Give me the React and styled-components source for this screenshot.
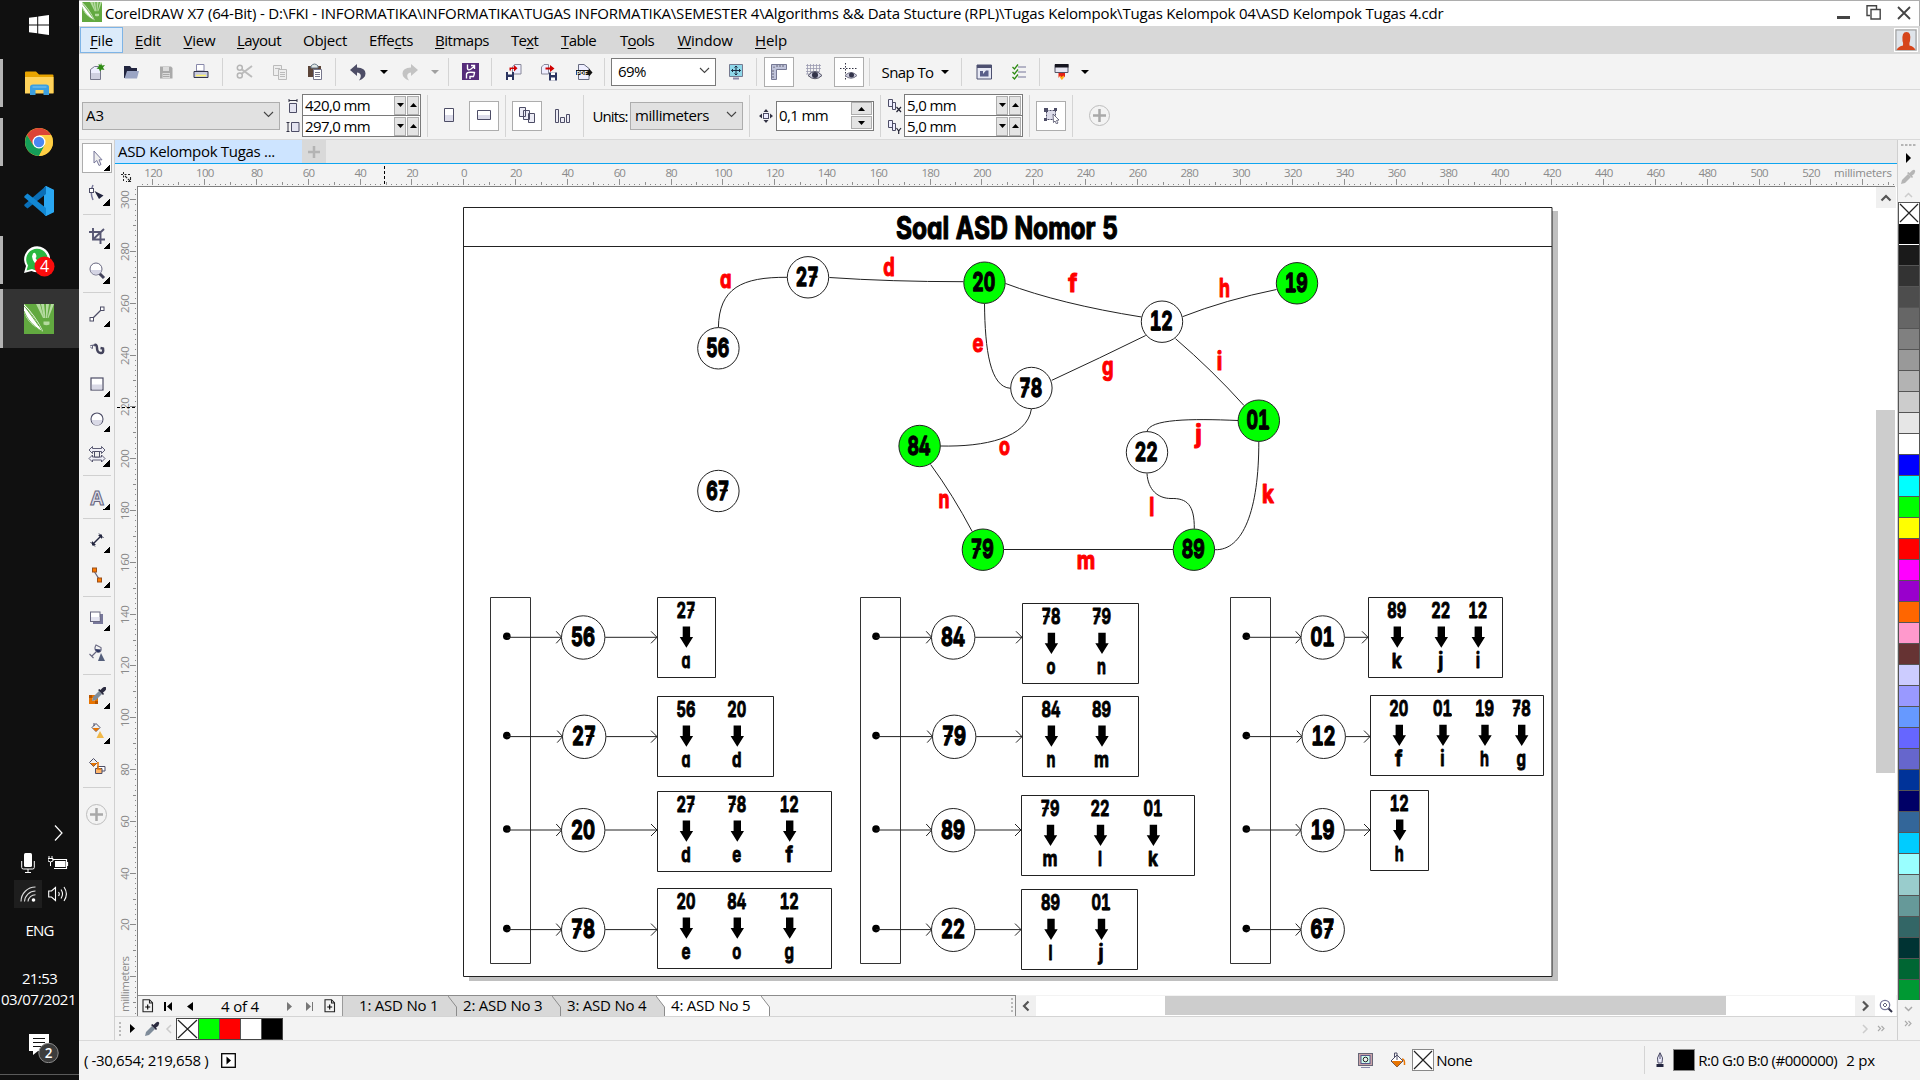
import React from 'react';
import styled, { createGlobalStyle, css } from 'styled-components';

const Global = createGlobalStyle`
  html, body { margin: 0; padding: 0; }
  body { width: 1920px; height: 1080px; overflow: hidden; background: #f3f3f3; }
  * { box-sizing: border-box; }
  svg { display: block; flex: none; }
`;

const Screen = styled.div`
  display: grid;
  grid-template-columns: 79px 1fr;
  width: 1920px;
  height: 1080px;
  font-family: 'Open Sans', 'Noto Sans', sans-serif;
  font-size: 15px;
  line-height: 20px;
  color: #000;
  white-space: pre;
`;

const Label = styled.span`
  letter-spacing: ${(p) => p.$ls || 0}px;
  font-size: ${(p) => p.$size || 15}px;
  color: ${(p) => p.$color || '#000'};
  flex: none;
`;

const Icon = ({ w = 20, h = w, children }) => (
  <svg width={w} height={h} viewBox={`0 0 ${w} ${h}`} fill="none">{children}</svg>
);

/* ---------- Windows taskbar ---------- */

const Taskbar = styled.aside`
  display: flex;
  flex-direction: column;
  height: 1080px;
  background: linear-gradient(#5a5a5a, #5a5a5a) 0 1074px / 100% 1px no-repeat #101010;
  color: #fff;
`;
const StartButton = styled.div`
  height: 53px;
  display: flex;
  align-items: center;
  justify-content: center;
  padding: 0 2px 4px 0;
`;
const TaskButton = styled.div`
  height: 59px;
  display: flex;
  padding-right: 1px;
  align-items: center;
  justify-content: center;
  background: ${(p) => (p.$active ? '#333' : 'transparent')};
  background-image: ${(p) => (p.$open ? 'linear-gradient(#b4b4b4,#b4b4b4)' : 'none')};
  background-repeat: no-repeat;
  background-position: 0 center;
  background-size: 3px ${(p) => (p.$active ? 59 : 48)}px;
`;
const Tray = styled.div`
  margin: auto 0 5px;
  display: flex;
  flex-direction: column;
  height: 258px;
  flex: none;
`;
const TrayRow = styled.div`
  height: ${(p) => p.$h}px;
  flex: none;
  display: flex;
  align-items: center;
  justify-content: ${(p) => (p.$end ? 'flex-end' : 'center')};
  padding: ${(p) => p.$pt || 0}px ${(p) => p.$pr || 0}px 0 ${(p) => p.$pl || 0}px;
`;
const TrayCell = styled.div`
  width: 28px;
  height: 28px;
  margin-right: ${(p) => p.$mr || 0}px;
  display: flex;
  align-items: center;
  justify-content: center;
  background: ${(p) => (p.$hot ? '#1e1e1e' : 'transparent')};
`;

const CorelLogo = ({ size }) => (
  <svg width={size} height={size} viewBox="0 0 30 30">
    <rect width="30" height="30" fill="#62a940" />
    <path d="M12 0h4l4 14h-1zM17 0h3l1.500 14h-1.500zM22 0h3l-2 14h-1zM27 0h3l-5.500 14h-1z" fill="#b5dba0" />
    <path d="M19.500 17.500h6v3q-3 1.500-6 0z" fill="#b5dba0" />
    <path d="M0 0V8C2 15 8 22 18 27.500C19 27 19 27 18 25C14 17 8 8 0 0Z" fill="#fff" />
    <path d="M0 7C3 15 9 22 18 27.500M0 2C8 10 13 17 18 27" stroke="#62a940" strokeWidth=".9" fill="none" />
    <path d="M2 4L15 22" stroke="#62a940" strokeWidth="1" />
  </svg>
);

const WindowsIcon = () => (
  <svg width="20" height="20" viewBox="0 0 20 20" fill="#fff">
    <path d="M0 2.800L8.200 1.700V9.500H0zM9.200 1.500L20 0V9.500H9.200zM0 10.500H8.200V18.300L0 17.200zM9.200 10.500H20V20L9.200 18.500z" />
  </svg>
);
const FolderIcon = () => (
  <svg width="29" height="24" viewBox="0 0 29 24">
    <path d="M0 1.500Q0 .5 1 .5H11L14 3.500H27.500Q28.500 3.500 28.500 4.500V22H0z" fill="#e8a400" />
    <path d="M0 6H28.500V22.500H0z" fill="#ffd35c" />
    <path d="M5 24V16Q5 13.500 8 13.500H21Q24 13.500 24 16V24H18.500V19H10.500V24z" fill="#3c9fe0" />
    <path d="M7.500 16H21.500" stroke="#69bbee" strokeWidth="1.500" />
  </svg>
);
const ChromeIcon = () => (
  <svg width="28" height="28" viewBox="-14 -14 28 28">
    <circle r="14" fill="#fbc92f" />
    <path d="M-12.100 -7A14 14 0 0 1 12.100 -7L0 -6.600L-5.700 3.300Z" fill="#dc4437" />
    <path d="M-12.100 -7A14 14 0 0 0 0 14L5.700 3.300L-5.700 3.300Z" fill="#149e58" />
    <path d="M12.100 -7H0L5.700 3.300L0 14A14 14 0 0 0 12.100 -7Z" fill="#ffce44" />
    <circle r="6.500" fill="#fff" />
    <circle r="5.200" fill="#4a87f0" />
  </svg>
);
const CodeIcon = () => (
  <svg width="30" height="30" viewBox="0 0 30 30">
    <path d="M21.500 0L30 4V26L21.500 30L20 28V2Z" fill="#2aa7f2" />
    <path d="M22 0V8L3.500 22.500L0.500 20Q0 19 .5 18.500Z" fill="#0a6fb8" />
    <path d="M22 30V22L3.500 7.500L0.500 10Q0 11 .5 11.500Z" fill="#1288d4" />
    <path d="M22 0L30 4V26L22 30Z" fill="#2aa7f2" />
  </svg>
);
const WhatsAppIcon = () => (
  <svg width="32" height="34" viewBox="0 -1.500 32 34">
    <path d="M1 28.500L3 21.500A13 13 0 1 1 8.500 26.500Z" fill="#fff" />
    <path d="M3.500 26L5 21A10.800 10.800 0 1 1 9 24.600Z" fill="#2bb741" />
    <path d="M10 9Q12 7 13 10T12.500 13.500Q15 18 19 19.500L18 21.500Q10 20 9 12Z" fill="#fff" />
    <circle cx="21.500" cy="22" r="10" fill="#fb0d0d" />
    <text x="21.500" y="27.500" textAnchor="middle" fontSize="16" fill="#fff" fontFamily="Open Sans, sans-serif">4</text>
  </svg>
);

function WindowsTaskbar() {
  return (
    <Taskbar>
      <StartButton><WindowsIcon /></StartButton>
      <TaskButton $open><FolderIcon /></TaskButton>
      <TaskButton $open><ChromeIcon /></TaskButton>
      <TaskButton><CodeIcon /></TaskButton>
      <TaskButton $open><WhatsAppIcon /></TaskButton>
      <TaskButton $open $active><CorelLogo size={30} /></TaskButton>
      <Tray>
        <TrayRow $h={32} $end $pr={16}>
          <Icon w={9} h={16}><path d="M1 .5L8 8L1 15.500" stroke="#fff" strokeWidth="1.200" /></Icon>
        </TrayRow>
        <TrayRow $h={28} $pl={7}>
          <TrayCell $mr={3}>
            <Icon w={14} h={20}>
              <rect x="3" y="0" width="8" height="14" rx="1.500" fill="#fff" />
              <path d="M.7 8V14.500Q.7 16 2.500 16H11.500Q13.300 16 13.300 14.500V8M7 16V19.500M4 19.500H10" stroke="#fff" />
            </Icon>
          </TrayCell>
          <TrayCell>
            <Icon w={21} h={14}>
              <path d="M4.500 3.500H18.500V12.500H6M19.500 6V10" stroke="#fff" strokeWidth="1.200" />
              <rect x="7" y="5" width="10.500" height="6" fill="#fff" />
              <path d="M1 0V2M4 0V2M0 2.500H5V5Q2.500 7 0 5ZM2.500 6V10" stroke="#fff" />
            </Icon>
          </TrayCell>
        </TrayRow>
        <TrayRow $h={33} $pl={7}>
          <TrayCell $hot $mr={3}>
            <Icon w={16} h={16}>
              <path d="M1 15.500A14.500 14.500 0 0 1 15.500 1M4.500 15.500A11 11 0 0 1 15.500 5M8 15.500A7.500 7.500 0 0 1 15.500 8.700" stroke="#ddd" strokeWidth="1.100" />
              <circle cx="13.500" cy="14" r="1.800" fill="#fff" />
            </Icon>
          </TrayCell>
          <TrayCell>
            <Icon w={21} h={18}>
              <path d="M.7 6H3.500L7.500 2.500V15.500L3.500 12H.7ZM10.500 7Q12 9 10.500 11M13 4.500Q16 9 13 13.500M16 2Q20.800 9 16 16" stroke="#fff" strokeWidth="1.100" />
            </Icon>
          </TrayCell>
        </TrayRow>
        <TrayRow $h={39}><Label $color="#fff" $ls={-0.8}>ENG</Label></TrayRow>
        <TrayRow $h={19} />
        <TrayRow $h={19}><Label $color="#fff" $ls={-0.6}>21:53</Label></TrayRow>
        <TrayRow $h={24} $pr={2}><Label $color="#fff" $ls={-0.46}>03/07/2021</Label></TrayRow>
        <TrayRow $h={64} $pl={9} $pt={7}>
          <svg width="32" height="32" viewBox="0 0 32 32">
            <path d="M1 3H21V20H10L5 24V20H1Z" fill="#fff" />
            <path d="M5 7.500H17M5 11.500H17M5 15.500H17" stroke="#101010" />
            <circle cx="20.500" cy="22" r="9.700" fill="#3c3c3c" stroke="#8a8a8a" />
            <text x="20.500" y="27" textAnchor="middle" fontSize="13.500" fontWeight="600" fill="#fff" fontFamily="Open Sans, sans-serif">2</text>
          </svg>
        </TrayRow>
      </Tray>
    </Taskbar>
  );
}

/* ---------- Window chrome ---------- */

const AppWindow = styled.main`
  display: grid;
  grid-template-rows: 26px 28px 36px 50px 901px 39px;
  min-width: 0;
`;
const TitleBar = styled.header`
  display: flex;
  align-items: center;
  border-top: 1px solid #adadad;
  border-right: 1px solid #adadad;
  background: #fff;
  padding: 0 8px 3px 3px;
  gap: 3px;
`;
const TitleText = styled(Label)`
  flex: 1;
  padding-top: 1px;
`;
const WindowButtons = styled.div`
  display: flex;
  align-items: center;
  gap: 16px;
  padding-top: 1px;
`;
const MenuBar = styled.nav`
  display: flex;
  align-items: center;
  background: #d8d8d8;
  padding: 0 2px 0 1px;
`;
const MenuItem = styled.div`
  width: ${(p) => p.$w}px;
  height: 26px;
  display: flex;
  align-items: center;
  justify-content: center;
  letter-spacing: ${(p) => p.$ls}px;
  border: 1px solid ${(p) => (p.$hot ? '#7eb4e6' : 'transparent')};
  background: ${(p) => (p.$hot ? '#dcebfa' : 'transparent')};
`;
const Underlined = styled.span`
  text-decoration: underline;
  text-underline-offset: 2px;
  text-decoration-thickness: 1px;
`;
const Account = styled.div`
  margin-left: auto;
  display: flex;
`;
const Toolbar = styled.div`
  display: flex;
  align-items: center;
  background: #f3f3f3;
  border-bottom: 1px solid #d9d9d9;
`;
const Slot = styled.div`
  width: ${(p) => p.$w || 35}px;
  flex: none;
  display: flex;
  align-items: center;
  justify-content: center;
`;
const Divider = styled.div`
  width: 1px;
  height: ${(p) => p.$h || 28}px;
  margin: 0 ${(p) => p.$mr ?? 4}px 0 ${(p) => p.$ml ?? 3}px;
  flex: none;
  background: #d4d4d4;
`;
const Toggle = styled.div`
  width: 30px;
  height: 30px;
  margin: 0 ${(p) => p.$mr ?? 3}px 0 ${(p) => p.$ml ?? 3}px;
  flex: none;
  display: flex;
  align-items: center;
  justify-content: center;
  background: #fff;
  border: 1px solid #adadad;
`;
const Combo = styled.div`
  width: ${(p) => p.$w}px;
  height: 28px;
  margin: 0 ${(p) => p.$mr || 0}px 0 ${(p) => p.$ml || 0}px;
  padding: 0 5px 2px ${(p) => p.$pl || 3}px;
  flex: none;
  display: flex;
  align-items: center;
  justify-content: space-between;
  border: 1px solid ${(p) => (p.$light ? '#7a7a7a' : '#adadad')};
  background: ${(p) => (p.$light ? '#fff' : '#e1e1e1')};
`;
const Chevron = () => <Icon w={11} h={7}><path d="M1 1L5.500 5.500L10 1" stroke="#444" strokeWidth="1.100" /></Icon>;
const Caret = ({ color = '#000' }) => <Icon w={8} h={4}><path d="M0 0H8L4 4Z" fill={color} /></Icon>;

const DARK = '#4d4d66';
const Drop = ({ x = 0, y = 0, body = '#7f8c9a' }) => (
  <g transform={`translate(${x} ${y})`}>
    <path d="M1 15L2 11L8 5L11 8L5 14Z" fill={body} />
    <path d="M7 4L12 9L13 8L12 6.500Q16 4 15 1.500T9.500 4L8.500 3Z" fill={body === '#7f8c9a' ? '#2b2b3f' : body} />
  </g>
);

function Menus() {
  const items = [
    [0, 'File', 43, -0.18, true], [0, 'Edit', 50, -0.16], [0, 'View', 53, -0.19], [0, 'Layout', 66, -0.54],
    [2, 'Object', 66, -0.26], [4, 'Effects', 66, -0.36], [0, 'Bitmaps', 76, -0.48], [2, 'Text', 49, -0.72],
    [0, 'Table', 59, -0.6], [1, 'Tools', 58, -0.65], [0, 'Window', 78, -0.28], [0, 'Help', 54, -0.11],
  ];
  return (
    <MenuBar>
      {items.map(([u, t, w, ls, hot]) => (
        <MenuItem key={t} $w={w} $ls={ls} $hot={hot}>
          <span>{t.slice(0, u)}<Underlined>{t[u]}</Underlined>{t.slice(u + 1)}</span>
        </MenuItem>
      ))}
      <Account>
        <svg width="24" height="24" viewBox="0 0 24 24">
          <rect x=".5" y=".5" width="23" height="23" fill="#ddd" stroke="#fff" />
          <rect x="2" y="2" width="20" height="20" fill="#dfe4ea" stroke="#999" />
          <path d="M3 22Q3 19 9 17.500Q9.500 15 8.500 13Q7.500 4 12.500 4T16 13Q15 15 15.500 17.500Q21 19 21 22Z" fill="#d6451b" />
        </svg>
      </Account>
    </MenuBar>
  );
}

function StandardToolbar() {
  return (
    <Toolbar>
      <Slot $w={34}><Icon w={18} h={18}>
        <path d="M3.500 16.500V6.500L7.500 3.500H13.500V16.500Z" fill="#eef" stroke="#77778c" /><path d="M4 10H13V16H4Z" fill="#cfcfe0" />
        <path d="M14 0L15 2.500L18 2L16 4.500L17.500 7L14.500 6.500L13 8.500L12 6L9.500 5.500L12 3.500L11.500 1L13.500 2Z" fill="#2e8b13" /></Icon></Slot>
      <Slot><Icon w={18} h={18}>
        <path d="M2 3H8L9.500 5H15V15H2Z" fill="#22253f" /><path d="M5 8H17L15 15.500H2.500Z" fill="#9ba5c4" /></Icon></Slot>
      <Slot><Icon w={16} h={16}>
        <path d="M2 2.500H13L14.500 4V14.500H2Z" fill="#aaa" /><path d="M5 3H11V7H5ZM4.500 9H12V14H4.500Z" fill="#dcdcdc" /><path d="M5 10.500H11.500M5 12.500H11.500" stroke="#aaa" /></Icon></Slot>
      <Slot><Icon w={18} h={18}>
        <path d="M4.500 1.500H12V8H4.500Z" fill="#fff" stroke="#88a" /><path d="M2 8.500H16V14.500H2Z" fill="#c9cbe0" stroke="#33344a" /><path d="M4 12.500H14" stroke="#fff36a" strokeWidth="1.500" /></Icon></Slot>
      <Divider $ml={4} $mr={4} />
      <Slot><Icon w={18} h={18}>
        <path d="M16 3L6 10.500M16 14L6 6.500" stroke="#bcbcbc" strokeWidth="2" /><circle cx="3.800" cy="4.800" r="2.500" stroke="#b5b5b5" strokeWidth="1.500" /><circle cx="3.800" cy="12.500" r="2.500" stroke="#b5b5b5" strokeWidth="1.500" /></Icon></Slot>
      <Slot><Icon w={18} h={18}>
        <path d="M2.500 2.500H10.500V12.500H2.500Z" fill="#eee" stroke="#bbb" /><path d="M7.500 6.500H15.500V16.500H7.500Z" fill="#eee" stroke="#bbb" /><path d="M4 5.500H9M9 9.500H14M9 11.500H14M9 13.500H14" stroke="#bbb" /></Icon></Slot>
      <Slot><Icon w={18} h={18}>
        <path d="M2 3H15V14H2Z" fill="#5b4438" /><path d="M5 3Q8.500 -1 12 3V5H5Z" fill="#dfe6e4" stroke="#678" /><path d="M7.500 6.500H15.500V16.500H7.500Z" fill="#fff" stroke="#77778c" /><path d="M9 9.500H14M9 11.500H14M9 13.500H14" stroke="#77778c" /></Icon></Slot>
      <Divider />
      <Slot $w={36}><Icon w={18} h={18}>
        <path d="M1 7L8 1V4.500Q16.500 5 16.500 10.500Q16.500 15 10 17.500Q12.500 14 11.500 11.500Q10.500 9.500 8 9.500V13Z" fill={DARK} /></Icon></Slot>
      <Slot $w={16}><Caret /></Slot>
      <Slot $w={36}><Icon w={18} h={18}>
        <path d="M17 7L10 1V4.500Q1.500 5 1.500 10.500Q1.500 15 8 17.500Q5.500 14 6.500 11.500Q7.500 9.500 10 9.500V13Z" fill="#c3c3c3" /></Icon></Slot>
      <Slot $w={14}><Caret color="#a0a0a0" /></Slot>
      <Divider $ml={6} />
      <Slot><Icon w={17} h={17}>
        <rect width="17" height="17" fill="#552c7a" /><path d="M5.500 1.500V5.500Q6 8 9 6L12 3.500M9 2.500H12.500V6M4.500 15.500V11Q5 8.500 12.500 9.500Q12 13 11.500 13.500H8V16" stroke="#fff" strokeWidth="1.400" /></Icon></Slot>
      <Divider />
      <Slot><Icon w={18} h={18}>
        <path d="M9.500 1.500H16V11H7.500V4Z" fill="#eef" stroke="#889" /><path d="M1 9H9V17H1Z" fill="#2c3560" /><path d="M3 9H7V11.500H3ZM3 14H7V17H3Z" fill="#fff" /><path d="M4.500 7.500V4.500H9V2L12.500 5.200L9 8.500V6H6V7.500Z" fill="#d00000" /></Icon></Slot>
      <Slot><Icon w={18} h={18}>
        <path d="M1.500 11V4L4 1.500H8.500V11Z" fill="#eef" stroke="#889" /><path d="M9 9.500H17V17.500H9Z" fill="#2c3560" /><path d="M11 9.500H15V12H11ZM11 14.500H15V17.500H11Z" fill="#fff" /><path d="M5.500 6.500V4.500H10V2L14.500 5.500L10 9V6.500Z" fill="#d00000" /></Icon></Slot>
      <Slot><Icon w={18} h={18}>
        <path d="M3.500 1.500H9L14 5.500V16.500H3.500Z" fill="#eef" stroke="#666a80" /><path d="M1 7H14V5.500L17.500 9.500L14 13.500V12H1Z" fill="#111" />
        <text x="1.500" y="11.700" fontSize="6" fontWeight="700" fill="#fff" fontFamily="Roboto, sans-serif">PDF</text></Icon></Slot>
      <Divider $mr={6} />
      <Combo $w={105} $pl={6} $light $mr={2}><Label $ls={-0.52}>69%</Label><Chevron /></Combo>
      <Slot><Icon w={16} h={17}>
        <path d="M1.500 1.500H14.500V13.500H1.500Z" fill="#8fd8ea" stroke="#777a90" /><path d="M5 15.500H11" stroke="#88a" strokeWidth="2" />
        <path d="M8 3V12M3.500 7.500H12.500M6.500 4.500L8 3L9.500 4.500M6.500 10.500L8 12L9.500 10.500M5 6L3.500 7.500L5 9M11 6L12.500 7.500L11 9" stroke="#1a2a40" /></Icon></Slot>
      <Divider />
      <Toggle><Icon w={18} h={18}><path d="M1.500 1.500H16.500V6.500H6.500V16.500H1.500Z" fill="#bfc3da" stroke="#777a95" /><path d="M4 3.500V5M7 2V4M10 2V4M13 2V4M2 8H4M2 11H4M2 14H4" stroke="#667" /></Icon></Toggle>
      <Slot $w={34}><Icon w={18} h={18}>
        <path d="M2.500 1V11M5.500 1V11M8.500 1V9M11.500 1V8M14.500 1V9M1 2.500H16M1 5.500H16M1 8.500H14M1 11H6" stroke="#9a9ab0" strokeWidth=".8" />
        <path d="M3 12.500Q10 4.500 17 12.500Q10 19 3 12.500Z" fill="#ccd" stroke="#556" /><circle cx="10" cy="12" r="3" fill="#33344a" /></Icon></Slot>
      <Toggle $mr={2} $ml={3}><Icon w={18} h={18}>
        <path d="M5.500 0V18M0 5.500H18" stroke="#334" strokeDasharray="1.500 1.500" /><path d="M5 12.500Q11 6.500 17 12.500Q11 18 5 12.500Z" fill="#ccd" stroke="#778" /><circle cx="11.500" cy="12" r="2.500" fill="#33344a" /></Icon></Toggle>
      <Divider $mr={9} />
      <Slot $w={57}><Label $ls={-0.59}>Snap To</Label></Slot>
      <Slot $w={18}><Caret /></Slot>
      <Divider $ml={7} />
      <Slot><Icon w={16} h={16}>
        <path d="M1 1H15.500V15H1Z" fill="#e7e9f5" stroke="#4d5070" /><path d="M1 1H15.500V4H1Z" fill="#4d5070" /><path d="M4 7H7V10L10 6.500H12.500V12.500H4Z" fill="#5a5f8a" /></Icon></Slot>
      <Slot><Icon w={16} h={18}>
        <path d="M7 4H15M7 9H15M7 14H15" stroke="#77779a" strokeWidth="1.200" /><path d="M1.500 4L3.500 6L7 1.500M1.500 9L3.500 11L7 6.500M1.500 14L3.500 16L7 11.500" stroke="#2e8b13" strokeWidth="1.300" /></Icon></Slot>
      <Divider />
      <Slot><Icon w={16} h={17}>
        <path d="M1 1.500H14V9.500H1Z" fill="#e6e6f2" stroke="#556" /><path d="M1 1H14.500V4.500H1Z" fill="#15151f" /><path d="M5 11H10.500Q10.500 15 7.700 17Q5 14.500 5 11Z" fill="#ffb01a" /><path d="M4.500 10H11V14.500L9.500 12.500L7.500 14L6 12.500L4.500 15Z" fill="#e32214" /></Icon></Slot>
      <Slot $w={12}><Caret /></Slot>
    </Toolbar>
  );
}

const SpinPair = styled.div`
  width: ${(p) => p.$w}px;
  margin-left: 1px;
  flex: none;
  border: 1px solid #7a7a7a;
  background: #fff;
  display: flex;
  flex-direction: column;
`;
const SpinLine = styled.div`
  height: 20px;
  display: flex;
  align-items: center;
  padding: 0 1px 0 2px;
  & + & { border-top: 1px solid #7a7a7a; height: 21px; }
`;
const SpinButton = styled.div`
  width: ${(p) => p.$w || 12}px;
  height: ${(p) => p.$h || 19}px;
  margin-left: ${(p) => (p.$push ? 'auto' : '1px')};
  display: flex;
  align-items: center;
  justify-content: center;
  background: #e4e4e4;
  border: 1px solid #adadad;
`;
const IconStack = styled.div`
  width: ${(p) => p.$w || 17}px;
  display: flex;
  flex-direction: column;
  align-items: center;
  gap: ${(p) => p.$gap || 5}px;
  flex: none;
`;
const Nudge = styled.div`
  width: 98px;
  height: 30px;
  display: flex;
  align-items: center;
  border: 1px solid #7a7a7a;
  background: #fff;
  padding: 0 1px 0 2px;
`;
const NudgeText = styled(Label)`
  padding-bottom: 2px;
`;
const NudgeButtons = styled.div`
  margin-left: auto;
  display: flex;
  flex-direction: column;
  gap: 1px;
`;
const Tri = ({ up }) => <Icon w={7} h={4}><path d={up ? 'M0 4L3.500 0L7 4Z' : 'M0 0L3.500 4L7 0Z'} fill="#000" /></Icon>;

function Pair({ w, values, ls }) {
  return (
    <SpinPair $w={w}>
      {values.map((v, i) => (
        <SpinLine key={i}>
          <Label $ls={ls}>{v}</Label>
          <SpinButton $push><Tri /></SpinButton>
          <SpinButton><Tri up /></SpinButton>
        </SpinLine>
      ))}
    </SpinPair>
  );
}

const DupIcon = ({ s }) => (
  <Icon w={15} h={15}>
    <path d="M1.500 1.500H5.500V8.500H1.500ZM5.500 4.500H8.500V11.500H5.500Z" fill="#eef" stroke={DARK} />
    {s === 'x' ? <path d="M9.500 9L14 14M14 9L9.500 14" stroke="#223" strokeWidth="1.200" /> : <path d="M9.500 9L11.700 12L14 9M11.700 11.500V15" stroke="#223" strokeWidth="1.200" />}
  </Icon>
);

const PropertyToolbar = styled(Toolbar)`
  padding: 2px 0 0 3px;
`;
const PlusCircle = () => (
  <Icon w={23}><circle cx="11.500" cy="11.500" r="10" stroke="#bdbdbd" /><path d="M11.500 5V18M5 11.500H18" stroke="#a9a9a9" strokeWidth="2.500" /></Icon>
);

function PropertyBar() {
  return (
    <PropertyToolbar>
      <Combo $w={198} $mr={4}><Label>A3</Label><Chevron /></Combo>
      <IconStack $gap={8}>
        <Icon w={12} h={14}><path d="M2 1.500H10M2 0V3M10 0V3" stroke="#334" /><path d="M2.500 4.500H9.500V13.500H2.500Z" fill="#e4e4f0" stroke={DARK} /></Icon>
        <Icon w={14} h={12}><path d="M2 1V11M.5 1.500H3.500M.5 10.500H3.500" stroke="#334" /><path d="M5.500 1.500H13V10.500H5.500Z" fill="#e4e4f0" stroke={DARK} /></Icon>
      </IconStack>
      <Pair w={119} values={['420,0 mm', '297,0 mm']} ls={-0.61} />
      <Divider $h={42} $ml={6} />
      <Slot $w={34}><Icon w={11} h={15}><path d="M.5.5H9.500V13.500H.5Z" fill="#fff" stroke={DARK} /><path d="M1 7H9V13H1Z" fill="#dcdcea" /></Icon></Slot>
      <Toggle><Icon w={15} h={11}><path d="M.5.5H13.500V9.500H.5Z" fill="#fff" stroke={DARK} /><path d="M1 5H13V9H1Z" fill="#dcdcea" /></Icon></Toggle>
      <Divider $h={42} $mr={3} />
      <Toggle><Icon w={17} h={17}><path d="M.5.5H6.500V9.500H.5ZM4.500 3.500H10.500V12.500H4.500ZM9.500 6.500H15.500V15.500H9.500Z" fill="#ececf5" stroke={DARK} /></Icon></Toggle>
      <Slot $w={35}><Icon w={17} h={15}><path d="M1.500 1.500H4.500V14.500H1.500ZM6.500 9.500H10.500V14.500H6.500ZM12.500 6.500H15.500V14.500H12.500Z" fill="#ececf5" stroke={DARK} /></Icon></Slot>
      <Divider $h={42} $mr={8} />
      <Slot $w={36}><Label $ls={-0.89}>Units:</Label></Slot>
      <Combo $w={113} $ml={2} $pl={4}><Label $ls={-0.4}>millimeters</Label><Chevron /></Combo>
      <Divider $h={42} $ml={6} $mr={5} />
      <Slot $w={21}><Icon w={14} h={14}><rect x="4.500" y="4.500" width="5" height="5" fill="#eef" stroke={DARK} /><path d="M7 0L9.500 3H4.500ZM7 14L9.500 11H4.500ZM0 7L3 4.500V9.500ZM14 7L11 4.500V9.500Z" fill="#334" /></Icon></Slot>
      <Nudge>
        <NudgeText $ls={-0.62}>0,1 mm</NudgeText>
        <NudgeButtons>
          <SpinButton $w={21} $h={13}><Tri up /></SpinButton>
          <SpinButton $w={21} $h={13}><Tri /></SpinButton>
        </NudgeButtons>
      </Nudge>
      <Divider $h={42} $ml={6} $mr={5} />
      <IconStack $w={17} $gap={6}><DupIcon s="x" /><DupIcon s="y" /></IconStack>
      <Pair w={119} values={['5,0 mm', '5,0 mm']} ls={-0.62} />
      <Divider $h={42} $ml={6} $mr={3} />
      <Toggle><Icon w={17} h={17}><path d="M3.500 3.500H12.500V12.500H3.500Z" fill="#dcdcea" stroke={DARK} strokeDasharray="2 1" /><path d="M1 1H5V5H1ZM11 1H14V4H11ZM1 11H4V14H1Z" fill={DARK} /><path d="M10 7L16 13L13.500 13.500L15 16L13.500 17L12 14L10.500 15.500Z" fill="#fff" stroke={DARK} strokeWidth=".8" /></Icon></Toggle>
      <Divider $h={42} $ml={3} $mr={15} />
      <PlusCircle />
    </PropertyToolbar>
  );
}

/* ---------- Toolbox ---------- */

const Workspace = styled.div`
  display: grid;
  grid-template-columns: 36px 1fr 23px;
  border-bottom: 1px solid #d9d9d9;
  min-height: 0;
`;
const Toolbox = styled.div`
  background: #f3f3f3;
  border-right: 1px solid #d0d0d0;
  display: flex;
  flex-direction: column;
  align-items: center;
`;
const Tool = styled.div`
  width: 30px;
  height: 30px;
  margin: 3px 0 2px;
  flex: none;
  display: flex;
  align-items: center;
  justify-content: center;
  border: 1px solid transparent;
  ${(p) => p.$active && css`background: #fff; border-color: #adadad;`}
  ${(p) => p.$fly && css`
    background-image: linear-gradient(135deg, transparent 50%, #000 50%);
    background-size: 7px 7px;
    background-repeat: no-repeat;
    background-position: right 1px bottom 1px;
  `}
`;
const ToolRule = styled.div`
  width: 28px;
  height: 1px;
  margin: 4px 0 3px;
  flex: none;
  background: #d0d0d0;
`;
const ToolSpace = styled.div`
  margin-top: 12px;
`;

const tools = [
  { a: true, f: true, d: <><path d="M6 2V14L8.800 11.500L11 16.500L13 15.500L11 10.800H14Z" fill="#eee" stroke="#77779a" strokeWidth="1" /></> },
  { f: true, d: <><path d="M5 1Q1.500 8 5 16" stroke="#77779a" strokeWidth="1.500" /><rect x="1.500" y="4.500" width="4" height="4" fill="#fff" stroke={DARK} /><path d="M6.500 7L15.500 11.500L11 15Z" fill="#22253f" /></> },
  0,
  { f: true, d: <path d="M5 1V12.500H17M1 5H12.500V17M6 11.500L16 2" stroke="#565672" strokeWidth="1.900" /> },
  { f: true, d: <><path d="M11 11L16 16" stroke="#44445c" strokeWidth="3" /><circle cx="8" cy="7" r="6" fill="#fff" stroke="#66667f" /><path d="M2.600 8H13.400A5.500 5.500 0 0 1 2.600 8Z" fill="#d4d4e4" /></> },
  0,
  { f: true, d: <><path d="M4.500 13.500L13.500 4.500" stroke={DARK} strokeWidth="1.200" /><rect x="2" y="12.500" width="3.500" height="3.500" fill="#fff" stroke={DARK} /><rect x="12.500" y="2" width="3.500" height="3.500" fill="#fff" stroke={DARK} /></> },
  { d: <><path d="M6 5.500Q9 3.500 9 8T12.500 13T15 8.500L12.500 8" stroke="#44445c" strokeWidth="2.500" /><path d="M2 6L4.500 5V8.500L2.500 7.500M4.500 6L7 4.500" stroke="#66667f" /></> },
  { f: true, d: <><rect x="3" y="3" width="12" height="12" fill="#fff" stroke={DARK} strokeWidth="1.200" /><path d="M4 9.500H14V14.500H4Z" fill="#d9d9e6" /></> },
  { f: true, d: <><circle cx="9" cy="9" r="6" fill="#fff" stroke={DARK} strokeWidth="1.100" /><path d="M3.700 10H14.300A5.300 5.300 0 0 1 3.700 10Z" fill="#d9d9e6" /></> },
  { f: true, d: <><path d="M1 5L4.500 1.500V3.500H13.500V1.500L17 5L13.500 8.500V6.500H4.500V8.500ZM1 13.500L4.500 10V12H13.500V10L17 13.500L13.500 17V15H4.500V17Z" fill="#f0f0f8" stroke={DARK} strokeWidth=".9" /><path d="M6.500 6.500H11.500V12H6.500Z" fill="#eee" stroke={DARK} /></> },
  0,
  { f: true, d: <text x="9" y="16.500" textAnchor="middle" fontSize="19" fontWeight="700" fontFamily="Open Sans, sans-serif" fill="#dcdce8" stroke="#66667f" strokeWidth="1">A</text> },
  0,
  { f: true, d: <><path d="M5 13L13 5" stroke="#22253f" strokeWidth="1.500" /><path d="M4 14.500V10L8 14ZM14 3.500V8L10 4Z" fill="#22253f" /><path d="M2.500 11L7 15.500M11 2.500L15.500 7" stroke="#22253f" /></> },
  { f: true, d: <><path d="M6 5L11 13" stroke="#66667f" strokeWidth="1.200" /><rect x="4.500" y="2" width="4" height="4" fill="#ff7a00" stroke="#99501a" /><rect x="9.500" y="12" width="4" height="4" fill="#ff7a00" stroke="#99501a" /></> },
  0,
  { f: true, d: <><path d="M5 5H15V15H5Z" fill="#77779a" /><rect x="2.500" y="3" width="9.500" height="9.500" fill="#fff" stroke="#66667f" /><path d="M3 8H11.500V12H3Z" fill="#e4e4f0" /></> },
  { d: <><path d="M8 1L13 3.500Q14 9 9 8Q5.500 5 8 1ZM8 8L4 12M1.500 10L5.500 14" stroke="#66667f" strokeWidth="1.100" /><path d="M7 5L13 5.500Q12 9 9 8Z" fill="#2c3560" /><path d="M13 9L17 17H10Z" fill="#55607c" /></> },
  0,
  { f: true, d: <><rect x="1" y="8" width="9" height="9" fill="#e87400" /><path d="M1 8H4V11H1ZM7 14H10V17H7Z" fill="#b55500" /><path d="M4 11H7V14H4Z" fill="#ffb25a" /><Drop x={3} y={-1} body="#7f8c9a" /></> },
  { f: true, d: <><path d="M4 5.500L8 1.500L12 5.500L8 9.500Z" fill="#eee" stroke={DARK} /><path d="M4.500 6H11.500L8 9.500Z" fill="#e87400" /><path d="M6 1V4" stroke={DARK} /><path d="M12 9L16 16H8.500Z" fill="#f1b94a" /></> },
  { d: <><path d="M1.500 5.500L5.500 1.500L9.500 5.500L5.500 9.500Z" fill="#eee" stroke={DARK} /><path d="M2.500 6H9L5.500 9.500Z" fill="#e87400" /><path d="M9.500 9.500H17V14H9.500Z" fill="#fff" stroke={DARK} /><path d="M7.500 11.500H14V16.500H7.500Z" fill="#ffb66b" stroke={DARK} /><path d="M10 5V12H13" stroke="#e87400" strokeWidth="1.500" /></> },
  0,
];

/* ---------- Rulers ---------- */

const PX = 2.5905;
const HRuler = () => {
  const ticks = [];
  for (let mm = -124; mm <= 552; mm += 2) {
    const x = Math.floor(463.8 + mm * PX) - 137;
    const y = mm % 20 === 0 ? 15 : mm % 10 === 0 ? 18 : 20;
    ticks.push(<rect key={mm} x={x} y={y} width="1" height={mm % 10 === 0 ? 21 - y : 1} fill={mm % 10 === 0 ? '#909090' : '#888'} />);
  }
  const labels = [];
  for (let mm = -120; mm <= 520; mm += 20) {
    labels.push(<text key={mm} x={463.8 + mm * PX - 137 + 0.5} y="13" textAnchor="middle" textLength={String(Math.abs(mm)).length * 6.1}>{Math.abs(mm)}</text>);
  }
  return (
    <svg width="1760" height="23" viewBox="0 0 1760 23" fontSize="11.500" fill="#8a8a8a" fontFamily="Open Sans, sans-serif">
      {ticks}{labels}
      <text x="1697" y="13" textLength="58">millimeters</text>
      <path d="M247.500 2V22" stroke="#000" strokeDasharray="3 2" />
      <path d="M0 22.500H1758" stroke="#7f7f7f" />
    </svg>
  );
};
const VRuler = () => {
  const ticks = [];
  const labels = [];
  for (let mm = 304; mm >= -14; mm -= 2) {
    const y = Math.floor(976.8 - mm * PX) - 187;
    if (y < 0) continue;
    const x = mm % 20 === 0 ? 15 : mm % 10 === 0 ? 18 : 20;
    ticks.push(<rect key={mm} x={x} y={y} width={mm % 10 === 0 ? 21 - x : 1} height="1" fill="#8a8a8a" />);
    if (mm % 20 === 0 && mm > 0) {
      labels.push(<text key={'t' + mm} transform={`translate(14 ${y + 0.5}) rotate(-90)`} textAnchor="middle" textLength={String(mm).length * 6.3}>{mm}</text>);
    }
  }
  return (
    <svg width="23" height="829" viewBox="0 0 23 829" fontSize="11.500" fill="#8a8a8a" fontFamily="Open Sans, sans-serif">
      {ticks}{labels}
      <text transform="translate(14 825) rotate(-90)" textLength="56">millimeters</text>
      <path d="M2 220.500H22" stroke="#000" strokeDasharray="3 2" />
      <path d="M22.500 0V829" stroke="#7f7f7f" />
    </svg>
  );
};

/* ---------- Drawing ---------- */

const GREEN = '#00ff00';
const DrawingSvg = styled.svg`
  font-family: Inter, Roboto, sans-serif;
  font-weight: 700;
  font-feature-settings: 'cv11', 'cv02', 'tnum', 'kern' 0;
  text { stroke-linejoin: round; }
`;

function Digits({ x, y, value, size, w }) {
  const half = w / 2;
  return (
    <g fill="#000" stroke="#000" strokeWidth={size > 23 ? 1.3 : 0.9}>
      <text x={x - half} y={y} fontSize={size} textLength={w} lengthAdjust="spacingAndGlyphs">{value}</text>
      {[...value].map((c, i) => {
        const cx = x - half + half * i + half / 2;
        if (c === '7') return <path key={i} d={`M${cx - half * 0.25} ${y - size * 0.36}h${half * 0.56}`} strokeWidth={size * 0.08} strokeLinecap="round" />;
        if (c === '1') return <path key={i} d={`M${cx - half * 0.28} ${y - size * 0.05}h${half * 0.64}`} strokeWidth={size * 0.12} strokeLinecap="round" />;
        return null;
      })}
    </g>
  );
}

const nodes = [
  ['27', 808, 277.3], ['20', 984.5, 282.7, 1], ['12', 1162, 321.7], ['19', 1297, 283.3, 1], ['56', 718.4, 348.3],
  ['78', 1031.4, 388], ['84', 919.6, 446, 1], ['01', 1258.8, 420.7, 1], ['22', 1147, 452.3], ['67', 718.4, 491],
  ['79', 982.9, 549.7, 1], ['89', 1193.9, 549.7, 1],
];
const edges = [
  'M718.400 327.500C719 288 742 277 787 277.300', 'M829.400 277.500Q890 281.700 963.500 281.700', 'M1005.500 283.500Q1060 304 1141.600 317',
  'M1182.500 316.700Q1225 300 1276.500 289.500', 'M984.500 303.500C985 350 990 387 1010.500 388.300', 'M1145.700 335.500Q1100 358 1051.800 380.300',
  'M1175.500 338.700Q1212 370 1244 405.500', 'M1238 420.500C1190 418.500 1150 419 1147 431.500', 'M1031.400 409C1027 438 985 447 940.500 446',
  'M930.600 464.500Q953 495 972.200 531.500', 'M1003.700 549.500H1173', 'M1147 473.500C1148 490 1158 498.500 1171 498.500C1187 498 1194.500 505 1194.300 528.700',
  'M1258.800 441.500C1259 510 1243 551 1214.700 549.700',
];
const edgeLabels = [
  ['a', 725.7, 288, 11.5], ['d', 889, 276, 11.5], ['e', 978, 351.7, 11], ['f', 1072.7, 292, 9], ['h', 1224.5, 297, 11],
  ['g', 1107.8, 375, 11.5], ['i', 1219.6, 370, 5.5], ['j', 1198.5, 443, 6.5], ['k', 1268, 503, 12], ['l', 1151.8, 516, 5],
  ['m', 1086, 568.5, 18.5], ['n', 944, 508, 11], ['o', 1004.5, 455.3, 11],
];
const lists = [
  { x: 490, dot: 506.8, c: 583.2, rows: [
    ['56', 657, 715.7, 597, [['27', 'a', 686.4]]],
    ['27', 657, 773.6, 696, [['56', 'a', 686.4], ['20', 'd', 737.3]]],
    ['20', 657, 831.5, 791, [['27', 'd', 686.4], ['78', 'e', 737.3], ['12', 'f', 789.7]]],
    ['78', 657, 831.5, 888, [['20', 'e', 686.4], ['84', 'o', 737.3], ['12', 'g', 789.7]]]] },
  { x: 860, dot: 876, c: 953.2, rows: [
    ['84', 1022, 1138.6, 603.3, [['78', 'o', 1051.4], ['79', 'n', 1102]]],
    ['79', 1022, 1138.6, 696, [['84', 'n', 1051.4], ['89', 'm', 1102]]],
    ['89', 1021, 1194.7, 795.3, [['79', 'm', 1050.5], ['22', 'l', 1100.5], ['01', 'k', 1153.4]]],
    ['22', 1021, 1137.7, 889.3, [['89', 'l', 1051], ['01', 'j', 1101.5]]]] },
  { x: 1230, dot: 1246.3, c: 1322.7, rows: [
    ['01', 1368, 1502.7, 597, [['89', 'k', 1397.3], ['22', 'j', 1441.3], ['12', 'i', 1478.3]]],
    ['12', 1370, 1543.7, 695.3, [['20', 'f', 1399.3], ['01', 'i', 1443], ['19', 'h', 1485], ['78', 'g', 1521.7]]],
    ['19', 1370, 1428.7, 790, [['12', 'h', 1399.7]]],
    ['67']] },
];
const rowY = [637, 736.3, 829.7, 929.3];
const letterW = { a: 9, d: 9.5, e: 9, f: 7.5, g: 9.5, h: 9, i: 4.3, j: 5, k: 10, l: 4, m: 15, n: 9, o: 9 };

const Drawing = () => (
  <DrawingSvg width="1738" height="808" viewBox="138 187 1738 808">
    <path d="M469 211H1558V981H469Z" fill="#c0c0c0" />
    <path d="M463.500 207.500H1552V976.500H463.500Z" fill="#fff" stroke="#222" />
    <path d="M464 246.500H1552" stroke="#222" />
    <text x="896" y="238.500" fontSize="31" textLength="222" lengthAdjust="spacingAndGlyphs" stroke="#000" strokeWidth="1.200">Soal ASD Nomor 5</text>
    <g fill="none" stroke="#222" strokeWidth="1">{edges.map((d) => <path key={d} d={d} />)}</g>
    {nodes.map(([t, x, y, g]) => (
      <g key={t}>
        <circle cx={x} cy={y} r="20.700" fill={g ? GREEN : '#fff'} stroke="#222" />
        <Digits x={x - 0.7} y={y + 8.7} value={t} size={26} w={23} />
      </g>
    ))}
    <g fill="#f00" stroke="#f00" strokeWidth="1.100" fontSize="25">
      {edgeLabels.map(([t, x, y, w]) => <text key={t} x={x - w / 2} y={y} textLength={w} lengthAdjust="spacingAndGlyphs">{t}</text>)}
    </g>
    {lists.map((l) => (
      <g key={l.x}>
        <path d={`M${l.x + 0.5} 597.500h${l.x === 490 ? 40 : 40}v366h-40Z`} fill="none" stroke="#333" />
        {l.rows.map(([t, x1, x2, top, items], i) => {
          const y = rowY[i] + 0.3;
          const cx = l.c + (i === 1 ? 1 : 0);
          return (
            <g key={t}>
              <circle cx={l.dot} cy={y - 1} r="3.800" />
              <path d={`M${l.dot} ${y}H${cx - 22}m-5 -6l5.500 6l-5.500 6`} fill="none" stroke="#222" />
              <circle cx={cx} cy={y + 0.2} r="21.700" fill="#fff" stroke="#222" />
              <Digits x={cx - 0.3} y={y + 8.7} value={t} size={26} w={24} />
              {items && (
                <>
                  <path d={`M${cx + 22} ${y}H${x1}m-6 -6l6 6l-6 6`} fill="none" stroke="#222" />
                  <path d={`M${x1 + 0.5} ${Math.floor(top)}.500H${Math.floor(x2)}.500v80H${x1 + 0.5}Z`} fill="none" stroke="#222" />
                  {items.map(([n, c, x]) => (
                    <g key={n}>
                      <Digits x={x - 0.5} y={top + 20.7} value={n} size={21} w={19} />
                      <path d={`M${x - 3.7} ${top + 29.5}h7.400v10.500h3l-6.700 10.700l-6.700 -10.700h3Z`} />
                      <text x={x - 0.5 - letterW[c] / 2} y={top + 71} fontSize="20.500" textLength={letterW[c]} lengthAdjust="spacingAndGlyphs" stroke="#000" strokeWidth=".8">{c}</text>
                    </g>
                  ))}
                </>
              )}
            </g>
          );
        })}
      </g>
    ))}
  </DrawingSvg>
);

/* ---------- Document area ---------- */

const DocumentArea = styled.section`
  display: grid;
  grid-template-rows: 24px 23px 808px 22px 23px;
  min-width: 0;
`;
const DocTabs = styled.div`
  display: flex;
  background: #e9e9e9;
  border-bottom: 1px solid #0ea5f0;
`;
const DocTab = styled.div`
  width: 187px;
  padding: 1px 0 0 3px;
  background: #cde4ff;
`;
const NewTab = styled.div`
  width: 24px;
  display: flex;
  align-items: center;
  justify-content: center;
  background: #d9d9d9;
`;
const RulerRow = styled.div`
  display: grid;
  grid-template-columns: 22px 1fr;
  background: #f3f3f3;
`;
const Corner = styled.div`
  display: flex;
  align-items: center;
  justify-content: center;
  padding-top: 3px;
`;
const CanvasRow = styled.div`
  display: grid;
  grid-template-columns: 23px 1738px 21px;
  background: #fff;
`;
const VRulerBox = styled.div`
  height: 829px;
  background: #f3f3f3;
`;
const VScroll = styled.div`
  display: flex;
  flex-direction: column;
  justify-content: space-between;
  width: 20px;
  background: linear-gradient(#cdcdcd, #cdcdcd) 0 223px / 19px 363px no-repeat #fff;
`;
const ScrollButton = styled.div`
  width: 20px;
  height: ${(p) => p.$h || 21}px;
  flex: none;
  display: flex;
  align-items: center;
  justify-content: center;
  background: #f0f0f0;
`;
const NavRow = styled.div`
  display: grid;
  grid-template-columns: 878px 859px 22px;
  margin-left: 23px;
  height: 22px;
  background: #f3f3f3;
`;
const PageNav = styled.div`
  display: flex;
  align-items: flex-start;
  height: 21px;
  border-top: 1px solid #8c8c8c;
  border-right: 1px solid #8c8c8c;
`;
const NavSlot = styled.div`
  width: ${(p) => p.$w}px;
  height: 20px;
  padding-right: ${(p) => p.$pr || 0}px;
  flex: none;
  display: flex;
  align-items: center;
  justify-content: center;
`;
const PageTab = styled.div`
  width: ${(p) => p.$w}px;
  height: 20px;
  line-height: 18px;
  flex: none;
  display: flex;
  justify-content: space-between;
  background: ${(p) => (p.$active ? '#fff' : '#d8d8d8')};
  padding-left: ${(p) => p.$pl || 6}px;
  border-left: ${(p) => (p.$first ? '1px solid #9a9a9a' : 'none')};
`;
const PageCount = styled(Label)`
  line-height: 18px;
  padding-bottom: 1px;
`;
const Grip = styled.div`
  width: 2px;
  height: 16px;
  margin: 2px 2px 0 auto;
  background: repeating-linear-gradient(#b9b9b9 0 2px, transparent 2px 4px);
`;
const HScroll = styled.div`
  display: flex;
  justify-content: space-between;
  margin-top: 1px;
  height: 20px;
  background: linear-gradient(#cdcdcd, #cdcdcd) 149px 0 / 561px 19px no-repeat #fff;
`;
const Navigator = styled.div`
  display: flex;
  align-items: center;
  justify-content: center;
  background: #fff;
  margin: 0 1px 1px 0;
`;
const DocPalette = styled.div`
  display: flex;
  align-items: center;
  background: #f3f3f3;
  padding-left: 4px;
  border-top: 1px solid #d4d4d4;
  margin-top: -1px;
`;
const Swatches = styled.div`
  display: flex;
  height: 22px;
  border: 1px solid #444;
  margin-left: 2px;
`;
const MiniSwatch = styled.div`
  width: 21px;
  background: ${(p) => p.$c};
  border-right: 1px solid #555;
  &:first-child { width: 22px; }
  &:last-child { border-right: 0; width: 20px; }
`;

const Cross = ({ w, h }) => (
  <svg width={w} height={h} viewBox={`0 0 ${w} ${h}`}>
    <rect width={w} height={h} fill="#fff" />
    <path d={`M1 1L${w - 1} ${h - 1}M${w - 1} 1L1 ${h - 1}`} stroke="#222" strokeWidth="1.200" />
  </svg>
);
const PageAdd = () => <Icon w={12} h={14}><path d="M1 .7H7.500L10.500 3.700V12.800H1ZM7.500 .7V4H10.500" stroke="#222" strokeWidth="1.100" /><path d="M5.700 5.500V10.500M3.200 8H8.200" stroke="#000" strokeWidth="1.100" /></Icon>;
const Bold = ({ d, w = 12, h = 12, c = '#555', sw = 2.2 }) => <Icon w={w} h={h}><path d={d} stroke={c} strokeWidth={sw} /></Icon>;
const TabEdge = ({ own, next }) => (
  <svg width="9" height="20" viewBox="0 0 9 20">
    <rect width="9" height="20" fill={next} />
    <path d="M0 0L8.500 11V20H0Z" fill={own} />
    <path d="M0 0L8.500 11V20" stroke="#8c8c8c" fill="none" />
  </svg>
);

function PageTabs() {
  const pages = [['1: ASD No 1', 115, 16], ['2: ASD No 3', 104, 6], ['3: ASD No 4', 104, 6], ['4: ASD No 5', 105, 6]];
  return pages.map(([t, w, pl], i) => (
    <PageTab key={t} $w={w} $pl={pl} $active={i === 3} $first={i === 0}>
      <Label $ls={-0.2}>{t}</Label>
      <TabEdge own={i === 3 ? '#fff' : '#d8d8d8'} next={i < 2 ? '#d8d8d8' : i === 2 ? '#fff' : '#f3f3f3'} />
    </PageTab>
  ));
}

/* ---------- Color palette ---------- */

const PaletteDock = styled.div`
  display: flex;
  flex-direction: column;
  align-items: center;
  background: #f3f3f3;
  border-left: 1px solid #cfcfcf;
`;
const PaletteSlot = styled.div`
  height: ${(p) => p.$h}px;
  padding-right: 2px;
  display: flex;
  align-items: center;
  justify-content: center;
  flex: none;
`;
const PaletteList = styled.div`
  align-self: stretch;
  display: flex;
  flex-direction: column;
  border-left: 1px solid #555;
  border-right: 1px solid #555;
`;
const PaletteSwatch = styled.div`
  height: 21px;
  border-top: 1px solid ${(p) => (p.$lit ? '#fff' : '#555')};
  background: ${(p) => p.$c};
`;
const palette = ['#000000', '#1a1a1a', '#333333', '#4d4d4d', '#666666', '#808080', '#999999', '#b3b3b3', '#cccccc', '#e6e6e6', '#ffffff',
  '#0000ff', '#00ffff', '#00ff00', '#ffff00', '#ff0000', '#ff00ff', '#9900cc', '#ff6600', '#ff99cc', '#663333', '#ccccff', '#9999ff',
  '#6699ff', '#6666ff', '#6666cc', '#003399', '#000066', '#336699', '#00ccff', '#99ffff', '#99cccc', '#669999', '#336666', '#003333', '#006633', '#009933'];

/* ---------- Status bar ---------- */

const StatusBar = styled.footer`
  display: flex;
  align-items: center;
  background: #f3f3f3;
  padding: 0 45px 1px 5px;
`;
const StatusRight = styled.div`
  margin-left: auto;
  display: flex;
  align-items: center;
`;
const StatusSwatch = styled.div`
  width: 22px;
  height: 22px;
  margin: 0 ${(p) => p.$mr}px 0 ${(p) => p.$ml}px;
  border: 1px solid #888;
  background: ${(p) => p.$c};
`;

export default function App() {
  return (
    <Screen>
      <Global />
      <WindowsTaskbar />
      <AppWindow>
        <TitleBar>
          <CorelLogo size={20} />
          <TitleText $ls={-0.18}>{'CorelDRAW X7 (64-Bit) - D:\\FKI - INFORMATIKA\\INFORMATIKA\\TUGAS INFORMATIKA\\SEMESTER 4\\Algorithms && Data Stucture (RPL)\\Tugas Kelompok\\Tugas Kelompok 04\\ASD Kelompok Tugas 4.cdr'}</TitleText>
          <WindowButtons>
            <Icon w={13} h={14}><path d="M0 10H13V13H0Z" fill="#444" /></Icon>
            <Icon w={15} h={15}><path d="M4 10.500H1V.8H10.500V4M5 4.500H14.200V14H5Z" stroke="#444" strokeWidth="1.400" /></Icon>
            <Icon w={14} h={14}><path d="M1 1L13 13M13 1L1 13" stroke="#444" strokeWidth="1.800" /></Icon>
          </WindowButtons>
        </TitleBar>
        <Menus />
        <StandardToolbar />
        <PropertyBar />
        <Workspace>
          <Toolbox>
            {tools.map((t, i) => (t ? (
              <Tool key={i} $active={t.a} $fly={t.f}><Icon w={18}>{t.d}</Icon></Tool>
            ) : <ToolRule key={i} />))}
            <ToolSpace><PlusCircle /></ToolSpace>
          </Toolbox>
          <DocumentArea>
            <DocTabs>
              <DocTab><Label $ls={-0.3}>ASD Kelompok Tugas ...</Label></DocTab>
              <NewTab><Icon w={12}><path d="M6 0V12M0 6H12" stroke="#b3b3b3" strokeWidth="2.500" /></Icon></NewTab>
            </DocTabs>
            <RulerRow>
              <Corner><Icon w={11} h={11}><path d="M2.500 0V10M0 2.500H10" stroke="#222" strokeDasharray="2 1.500" /><path d="M4 4L9 9M9.500 5V9.500H5" stroke="#222" strokeWidth="1.100" strokeDasharray="3 1" /></Icon></Corner>
              <HRuler />
            </RulerRow>
            <CanvasRow>
              <VRulerBox><VRuler /></VRulerBox>
              <Drawing />
              <VScroll>
                <ScrollButton><Bold d="M1.500 8.500L6 4L10.500 8.500" /></ScrollButton>
                <ScrollButton><Bold d="M1.500 4L6 8.500L10.500 4" /></ScrollButton>
              </VScroll>
            </CanvasRow>
            <NavRow>
              <PageNav>
                <NavSlot $w={20}><PageAdd /></NavSlot>
                <NavSlot $w={21}><Icon w={9} h={9}><path d="M1 0V9" stroke="#000" strokeWidth="2" /><path d="M8 0V9L3 4.500Z" fill="#000" /></Icon></NavSlot>
                <NavSlot $w={24} $pr={2}><Icon w={6} h={9}><path d="M6 0V9L0 4.500Z" fill="#000" /></Icon></NavSlot>
                <NavSlot $w={74}><PageCount $ls={-0.17}>4 of 4</PageCount></NavSlot>
                <NavSlot $w={25}><Icon w={6} h={9}><path d="M0 0V9L5 4.500Z" fill="#777" /></Icon></NavSlot>
                <NavSlot $w={16}><Icon w={8} h={9}><path d="M6.500 0V9" stroke="#777" /><path d="M0 0V9L5 4.500Z" fill="#777" /></Icon></NavSlot>
                <NavSlot $w={24}><PageAdd /></NavSlot>
                <PageTabs />
                <Grip />
              </PageNav>
              <HScroll>
                <ScrollButton $h={20}><Bold d="M8.500 1.500L4 6L8.500 10.500" /></ScrollButton>
                <ScrollButton $h={20}><Bold d="M4 1.500L8.500 6L4 10.500" /></ScrollButton>
              </HScroll>
              <Navigator><Icon w={14}><path d="M9 9L13 13" stroke="#33344a" strokeWidth="2" /><circle cx="6" cy="6" r="4.700" stroke="#77779a" strokeWidth="1.300" /><path d="M4 6L6 4L8 6L6 8Z" stroke="#66667f" /></Icon></Navigator>
            </NavRow>
            <DocPalette>
              <NavSlot $w={4}><Grip /></NavSlot>
              <NavSlot $w={18}><Icon w={5} h={9}><path d="M0 0L5 4.500L0 9Z" fill="#000" /></Icon></NavSlot>
              <NavSlot $w={22}><Icon w={16}><Drop /></Icon></NavSlot>
              <NavSlot $w={11}><Bold d="M6 1L2 5L6 9" w={8} h={10} c="#ccc" sw={1.5} /></NavSlot>
              <Swatches>
                <MiniSwatch $c="#fff"><Cross w={21} h={20} /></MiniSwatch>
                <MiniSwatch $c="#00ff00" /><MiniSwatch $c="#ff0000" /><MiniSwatch $c="#ffffff" /><MiniSwatch $c="#000000" />
              </Swatches>
              <StatusRight>
                <NavSlot $w={16}><Bold d="M2 1L6 5L2 9" w={8} h={10} c="#ccc" sw={1.500} /></NavSlot>
                <NavSlot $w={16}><Bold d="M1 1L3.500 3.500L1 6M4.500 1L7 3.500L4.500 6" w={8} h={7} c="#aaa" sw={1.100} /></NavSlot>
                <NavSlot $w={8} />
              </StatusRight>
            </DocPalette>
          </DocumentArea>
          <PaletteDock>
            <PaletteSlot $h={10}><Icon w={15} h={2}><path d="M0 1H15" stroke="#b5b5b5" strokeWidth="2" strokeDasharray="2.500 1.500" /></Icon></PaletteSlot>
            <PaletteSlot $h={15}><Icon w={5} h={10}><path d="M0 0L5 5L0 10Z" fill="#000" /></Icon></PaletteSlot>
            <PaletteSlot $h={23}><Icon w={16}><Drop body="#b5b5b5" /></Icon></PaletteSlot>
            <PaletteSlot $h={14}><Bold d="M1 6L4.500 2.500L8 6" w={9} h={8} c="#ccc" sw={1.500} /></PaletteSlot>
            <PaletteList>
              <PaletteSwatch $c="#fff"><Cross w={20} h={20} /></PaletteSwatch>
              {palette.map((c, i) => <PaletteSwatch key={c} $c={c} $lit={i < 2} />)}
            </PaletteList>
            <PaletteSlot $h={17}><Bold d="M1 2L4.500 5.500L8 2" w={9} h={8} c="#aaa" sw={1.500} /></PaletteSlot>
            <PaletteSlot $h={13}><Bold d="M1 1L3.500 3.500L1 6M4.500 1L7 3.500L4.500 6" w={8} h={7} c="#aaa" sw={1.100} /></PaletteSlot>
          </PaletteDock>
        </Workspace>
        <StatusBar>
          <Label $ls={-0.36}>( -30,654; 219,658 )</Label>
          <Slot $w={41}><Icon w={15}><rect x=".7" y=".7" width="13.600" height="13.600" fill="#fff" stroke="#000" strokeWidth="1.300" /><path d="M5.500 3.500V11.500L10 7.500Z" fill="#000" /></Icon></Slot>
          <StatusRight>
            <Icon w={15} h={15}><rect x=".5" y=".5" width="14" height="12" fill="#c9a3a8" stroke="#667" /><rect x="3" y="2.500" width="9" height="8" fill="#cfe" stroke="#558" /><circle cx="7.500" cy="6.500" r="2.300" fill="#eee" stroke="#222" /><path d="M3 14.500H12" stroke="#88a" /></Icon>
            <Slot $w={9} />
            <Slot $w={30}><Icon w={17} h={16}><path d="M2 9L8 3L14 9L8 15Z" fill="#fff" stroke={DARK} /><path d="M2.500 9H13.500L8 15Z" fill="#e87400" /><path d="M5.500 5V1H8V8" stroke={DARK} /><path d="M13 7Q16 7 15.500 13" stroke="#e87400" strokeWidth="1.500" /></Icon></Slot>
            <StatusSwatch $ml={0} $mr={2} $c="#fff"><Cross w={20} h={20} /></StatusSwatch>
            <Label $ls={-0.48}>None</Label>
            <Divider $h={28} $ml={172} $mr={10} />
            <Icon w={10} h={16}><path d="M5 .7Q1 6 3 11H7Q9 6 5 .7ZM5 1V7" fill="#eef" stroke={DARK} /><path d="M1.500 12H8.500V15H1.500Z" fill="#22253f" /></Icon>
            <StatusSwatch $ml={8} $mr={3} $c="#000" />
            <Label $ls={-0.48}>R:0 G:0 B:0 (#000000)</Label>
            <Slot $w={9} />
            <Label $ls={-0.2}>2 px</Label>
          </StatusRight>
        </StatusBar>
      </AppWindow>
    </Screen>
  );
}
